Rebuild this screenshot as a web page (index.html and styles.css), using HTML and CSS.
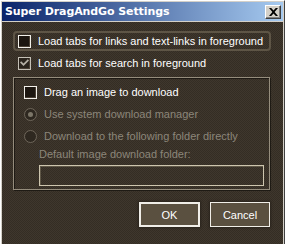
FILE: index.html
```html
<!DOCTYPE html>
<html>
<head>
<meta charset="utf-8">
<link rel="stylesheet" href="styles.css">
</head>
<body>
<div class="window">
  <div class="titlebar">
    <span class="title">Super DragAndGo Settings</span>
    <span class="close"><svg width="9" height="8" viewBox="0 0 9 8"><path d="M0 0h2.2l2.3 2.6L6.8 0H9L5.6 4 9 8H6.8L4.5 5.4 2.2 8H0l3.4-4z" fill="#000"/></svg></span>
  </div>
  <div class="content">
    <div class="row focus">
      <span class="check"></span>
      <span class="label">Load tabs for links and text-links in foreground</span>
    </div>
    <div class="row">
      <span class="check checked"><svg width="9" height="8" viewBox="0 0 9 8"><path d="M0 3.5l1.2-1.2L3.5 4.5 7.8 0.2 9 1.4 3.5 7z" fill="#b4afa4"/></svg></span>
      <span class="label">Load tabs for search in foreground</span>
    </div>
    <div class="group">
      <div class="grow">
        <span class="check"></span>
        <span class="label">Drag an image to download</span>
      </div>
      <div class="grow">
        <span class="radio sel"></span>
        <span class="label dis">Use system download manager</span>
      </div>
      <div class="grow">
        <span class="radio"></span>
        <span class="label dis">Download to the following folder directly</span>
      </div>
      <div class="fieldlabel dis">Default image download folder:</div>
      <div class="input"></div>
    </div>
    <div class="buttons">
      <button class="btn default">OK</button>
      <button class="btn">Cancel</button>
    </div>
  </div>
</div>
</body>
</html>
```
FILE: styles.css
```css
html, body {
  margin: 0;
  padding: 0;
}
body {
  width: 285px;
  height: 244px;
  overflow: hidden;
  background: #d4d0c8;
  font-family: "Liberation Sans", Arial, sans-serif;
  font-size: 11px;
}
.window {
  width: 285px;
  height: 244px;
  box-sizing: border-box;
  border-top: 1px solid #ffffff;
  border-left: 1px solid #ffffff;
  border-right: 1px solid #404040;
  padding: 1px 1px 0 1px;
  background: #d4d0c8;
  display: flex;
  flex-direction: column;
}
.titlebar {
  height: 19px;
  flex: none;
  display: flex;
  align-items: center;
  justify-content: space-between;
  padding: 0 2px 0 3px;
  background: linear-gradient(to right, #0a246a, #a6caf0);
}
.title {
  color: #ffffff;
  font-family: "DejaVu Sans", Verdana, sans-serif;
  font-weight: bold;
  font-size: 11px;
  letter-spacing: -0.1px;
}
.close {
  width: 16px;
  height: 14px;
  box-sizing: border-box;
  background: #d4d0c8;
  border-top: 1px solid #ffffff;
  border-left: 1px solid #ffffff;
  border-right: 1px solid #404040;
  border-bottom: 1px solid #404040;
  box-shadow: inset -1px -1px 0 #808080;
  display: flex;
  align-items: center;
  justify-content: center;
}
.content {
  flex: 1;
  margin-top: 1px;
  background-color: #3a3229;
  background-image: repeating-conic-gradient(#3f372d 0 25%, #342d24 0 50%);
  background-size: 2px 2px;
  padding: 9px 12px 0 11px;
  display: flex;
  flex-direction: column;
}
.row {
  height: 20px;
  box-sizing: border-box;
  display: flex;
  align-items: center;
  gap: 7px;
  padding-left: 5px;
  color: #ffffff;
}
.row.focus {
  border: 2px solid #5e5546;
  border-radius: 4px;
  padding-left: 3px;
  width: 258px;
}
.row + .row {
  margin-top: 2px;
}
.check {
  width: 13px;
  height: 13px;
  box-sizing: border-box;
  flex: none;
  border: 1px solid #f2f0ea;
  background: #1c1610;
  box-shadow: inset -1px -1px 0 #4a4034;
  display: flex;
  align-items: center;
  justify-content: center;
}
.check.checked {
  border-color: #c4c0b6;
  background: #2a241c;
}
.label {
  white-space: nowrap;
}
.dis {
  color: #8c867a;
}
.group {
  margin-top: 4px;
  width: 257px;
  height: 113px;
  box-sizing: border-box;
  border: 1px solid #958d7d;
  box-shadow: inset 1px 1px 0 #1e1a14, 1px 1px 0 #1e1a14;
  padding: 3px 0 0 10px;
  display: flex;
  flex-direction: column;
  color: #ffffff;
}
.grow {
  height: 22px;
  display: flex;
  align-items: center;
  gap: 7px;
}
.radio {
  width: 13px;
  height: 13px;
  box-sizing: border-box;
  flex: none;
  border-radius: 50%;
  border: 1px solid #6e665a;
  background: #2e2820;
  display: flex;
  align-items: center;
  justify-content: center;
}
.radio.sel::after {
  content: "";
  width: 5px;
  height: 5px;
  border-radius: 50%;
  background: #7c7668;
}
.fieldlabel {
  height: 14px;
  line-height: 14px;
  margin-left: 15px;
}
.input {
  margin-top: 4px;
  margin-left: 15px;
  width: 225px;
  height: 21px;
  box-sizing: border-box;
  border: 1px solid #cdc5ae;
  box-shadow: inset 1px 1px 0 #5e5646;
  background: transparent;
}
.buttons {
  width: 257px;
  margin-top: 12px;
  display: flex;
  justify-content: flex-end;
  gap: 10px;
}
.btn {
  width: 60px;
  height: 25px;
  box-sizing: border-box;
  font-family: "Liberation Sans", Arial, sans-serif;
  font-size: 11px;
  color: #ffffff;
  background: #5a5040;
  border: 1px solid #f0eee8;
  box-shadow: 0 0 2px 1px #2a241c;
  padding: 0;
}
.btn.default {
  width: 61px;
  border-width: 2px;
}
```
